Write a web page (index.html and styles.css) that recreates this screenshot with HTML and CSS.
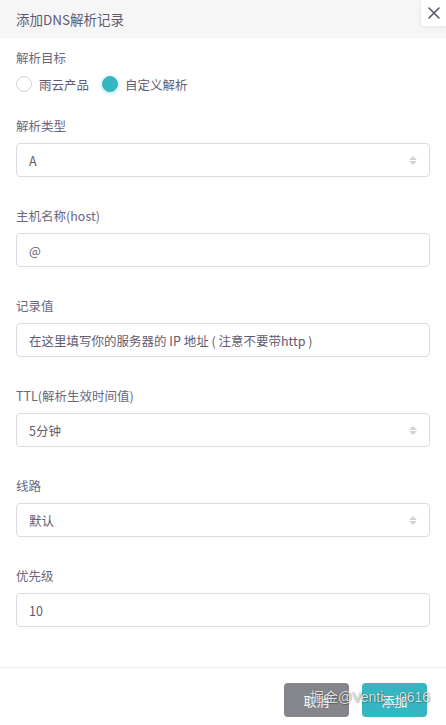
FILE: index.html
```html
<!DOCTYPE html>
<html lang="zh-CN">
<head>
<meta charset="utf-8">
<title>添加DNS解析记录</title>
<link rel="stylesheet" href="styles.css">
</head>
<body>
<div class="dialog">
  <div class="header">
    <span class="title">添加DNS解析记录</span>
    <button class="close" aria-label="关闭">
      <svg width="14" height="14" viewBox="0 0 14 14"><path d="M2 2L12 12M12 2L2 12" stroke="#5a5670" stroke-width="1.6" stroke-linecap="round"/></svg>
    </button>
  </div>
  <div class="body">
    <div class="field first">
      <div class="label">解析目标</div>
      <div class="radios">
        <label class="radio"><span class="dot"></span>雨云产品</label>
        <label class="radio checked"><span class="dot"></span>自定义解析</label>
      </div>
    </div>
    <div class="field">
      <div class="label">解析类型</div>
      <div class="box select">A<span class="arrows"></span></div>
    </div>
    <div class="field">
      <div class="label">主机名称(host)</div>
      <div class="box">@</div>
    </div>
    <div class="field">
      <div class="label">记录值</div>
      <div class="box">在这里填写你的服务器的 IP 地址 ( 注意不要带http )</div>
    </div>
    <div class="field">
      <div class="label">TTL(解析生效时间值)</div>
      <div class="box select">5分钟<span class="arrows"></span></div>
    </div>
    <div class="field">
      <div class="label">线路</div>
      <div class="box select">默认<span class="arrows"></span></div>
    </div>
    <div class="field last">
      <div class="label">优先级</div>
      <div class="box">10</div>
    </div>
  </div>
  <div class="footer">
    <button class="btn cancel">取消</button>
    <button class="btn add">添加</button>
    <span class="watermark">掘金@Venti__0616</span>
  </div>
</div>
</body>
</html>
```
FILE: styles.css
```css
* { box-sizing: border-box; }
html, body { margin: 0; padding: 0; background: #fff; }
body {
  font-family: "Noto Sans CJK SC", "Noto Sans", sans-serif;
  font-size: 12.5px;
  color: #67647a;
}
.dialog { width: 446px; height: 725px; position: relative; }
.header {
  height: 38px;
  background: #f6f6f6;
  padding-left: 16px;
  display: flex;
  align-items: center;
}
.title { color: #5f5b72; font-size: 13.5px; }
.close {
  position: absolute;
  top: 0;
  right: 0;
  width: 25px;
  height: 26px;
  border: none;
  padding: 0;
  background: #fff;
  border-bottom-left-radius: 4px;
  box-shadow: 0 1px 4px rgba(0,0,0,0.08);
  display: flex;
  align-items: center;
  justify-content: center;
}
.body { padding: 10px 16px 0; }
.field { margin-bottom: 29px; }
.field.first { margin-bottom: 22px; }
.field.last { margin-bottom: 40px; }
.label { height: 20px; line-height: 20px; margin-bottom: 7px; color: #6a677d; }
.first .label { margin-bottom: 6px; }
.radios { display: flex; height: 20px; align-items: center; }
.radio { display: flex; align-items: center; color: #5f5b72; margin-right: 13px; }
.dot {
  width: 16px; height: 16px; border-radius: 50%;
  border: 1px solid #d6d5de;
  background: #fff;
  margin-right: 7px;
}
.radio.checked .dot {
  border-color: #36b6c2;
  background: #36b6c2;
  box-shadow: 0 1px 4px rgba(54,182,194,0.45);
}
.box {
  height: 34px;
  border: 1px solid #dcdbe3;
  border-radius: 4px;
  padding: 0 12px;
  display: flex;
  align-items: center;
  color: #5f5b70;
  position: relative;
}
.select .arrows {
  position: absolute;
  right: 12px;
  top: 50%;
  width: 8px;
  height: 9px;
  margin-top: -4px;
}
.select .arrows::before, .select .arrows::after {
  content: "";
  position: absolute;
  left: 0;
  border-left: 4px solid transparent;
  border-right: 4px solid transparent;
}
.select .arrows::before { top: 0; border-bottom: 4px solid #d2d2d8; }
.select .arrows::after { bottom: 0; border-top: 4px solid #d2d2d8; }
.footer {
  border-top: 1px solid #eeeeee;
  padding: 15px 19px 0 0;
  display: flex;
  justify-content: flex-end;
  gap: 13px;
  position: relative;
}
.btn {
  width: 65px;
  height: 34px;
  border: none;
  border-radius: 4px;
  color: #fff;
  font-family: inherit;
  font-size: 13px;
  padding: 0;
}
.cancel { background: #85868b; }
.add { background: #36b6c2; }
.watermark {
  position: absolute;
  left: 310px;
  top: 21px;
  font-family: "Liberation Sans", "Noto Sans CJK SC", sans-serif;
  font-size: 14px;
  line-height: 17px;
  color: rgba(255,255,255,0.85);
  text-shadow: 0 0 1px rgba(0,0,0,0.55), 1px 1px 1px rgba(0,0,0,0.25);
  white-space: nowrap;
  pointer-events: none;
}
```
